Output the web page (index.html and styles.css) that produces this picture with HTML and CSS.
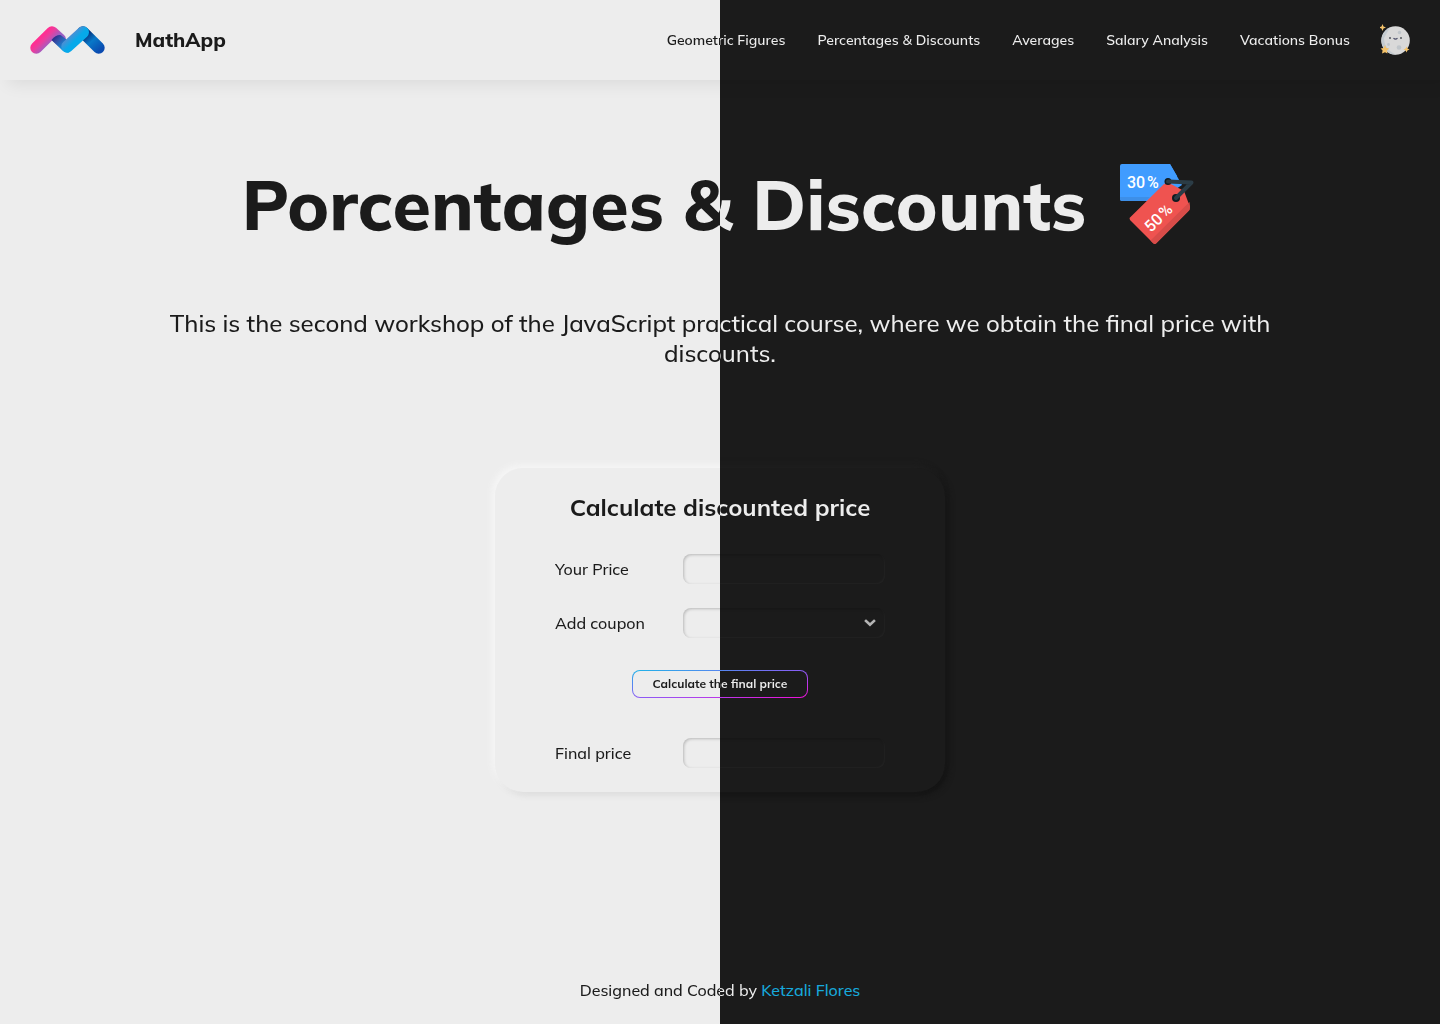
FILE: index.html
```html
<!DOCTYPE html>
<html lang="en">
<head>
<meta charset="utf-8">
<meta name="viewport" content="width=device-width, initial-scale=1">
<title>MathApp</title>
<link rel="stylesheet" href="styles.css">
</head>
<body>
<header class="header">
  <a class="brand" href="#">
    <svg class="brand-logo" viewBox="0 0 75 28" aria-hidden="true">
      <defs>
        <linearGradient id="pink" x1="11" y1="11" x2="19" y2="19" gradientUnits="userSpaceOnUse"><stop offset="0" stop-color="#ff2f92"/><stop offset=".4" stop-color="#e83f9f"/><stop offset="1" stop-color="#9b5fc4"/></linearGradient>
        <linearGradient id="indigo" x1="24" y1="11" x2="36" y2="23" gradientUnits="userSpaceOnUse"><stop offset="0" stop-color="#2b2a86"/><stop offset=".3" stop-color="#3350a8"/><stop offset="1" stop-color="#06a5ea"/></linearGradient>
        <linearGradient id="sky" x1="25" y1="25" x2="32" y2="32" gradientUnits="userSpaceOnUse"><stop offset="0" stop-color="#4b8fd4"/><stop offset=".7" stop-color="#06a9ea"/></linearGradient>
        <linearGradient id="navy" x1="57" y1="8" x2="71" y2="24" gradientUnits="userSpaceOnUse"><stop offset="0" stop-color="#06357f"/><stop offset=".4" stop-color="#0878c8"/><stop offset="1" stop-color="#0a4bb0"/></linearGradient>
      </defs>
      <g fill="none" stroke-width="12" stroke-linecap="round" stroke-linejoin="round">
        <path d="M53 6.300L68.700 21.700" stroke="url(#navy)"/>
        <path d="M6.300 21.700L22 6.300L30 13.500" stroke="url(#pink)"/>
      </g>
      <path d="M21.500 14Q26 8.500 31 9.200L42 18L39 26.500Q35.500 27.300 33 25Z" fill="url(#indigo)"/>
      <path d="M37.300 20.500L53 6.300" fill="none" stroke="url(#sky)" stroke-width="12" stroke-linecap="round"/>
    </svg>
    <span class="brand-name split-text">MathApp</span>
  </a>
  <nav class="nav">
    <a class="split-text" href="#">Geometric Figures</a>
    <a class="split-text" href="#">Percentages &amp; Discounts</a>
    <a class="split-text" href="#">Averages</a>
    <a class="split-text" href="#">Salary Analysis</a>
    <a class="split-text" href="#">Vacations Bonus</a>
  </nav>
  <button class="theme" type="button" aria-label="Change theme">
    <svg viewBox="0 0 30 32" aria-hidden="true">
      <circle cx="15.500" cy="16.500" r="14.300" fill="#d9d9d9"/>
      <path d="M10 3.400A14.300 14.300 0 0 0 17 30.700A17 17 0 0 1 4 14Z" fill="#c4cbd0"/>
      <g fill="#bfc5ca"><circle cx="19.500" cy="8.500" r="1.700"/><circle cx="8.500" cy="20.500" r="1.400"/><circle cx="19" cy="23.500" r="2.300"/></g>
      <g fill="#55575c"><circle cx="10" cy="14" r="1"/><circle cx="21" cy="14" r="1"/></g>
      <path d="M13.500 14.200q2 2 4 0" fill="none" stroke="#4d4f69" stroke-width="1.200"/>
      <g fill="#f5c36a"><path d="M2.500 0l1 2.500 2.500 1-2.500 1-1 2.500-1-2.500-2.500-1 2.500-1z"/><path d="M5 21l1.200 3 3 .4-2.200 2.200.4 3L5 28.200l-3 1.400.6-3L.6 24.400l3.200-.4z"/><path d="M26.500 22.500l.9 2.100 2.100.9-2.100.9-.9 2.100-.9-2.100-2.100-.9 2.100-.9z"/></g>
    </svg>
  </button>
</header>

<main class="main">
  <div class="title-row">
    <h1 class="title split-text">Porcentages &amp; Discounts</h1>
    <svg class="tags" viewBox="0 0 74 80" aria-hidden="true">
      <path d="M2 0H50L57 12V37H2Q0 37 0 35V2Q0 0 2 0Z" fill="#409cff"/>
      <path d="M0 33H30L26 37H2Q0 37 0 35Z" fill="#3d8fe8"/>
      <path d="M50 0L62 21L50 29Z" fill="#409cff"/>
      <path d="M10 56L9.500 54L44 20Q46 18.500 49 19L64 27L70 43Q70 46 68 47.500L36 79.500Q34.500 80.500 33 79Z" fill="#ef5350"/>
      <path d="M70 43Q70 46 68 47.500L36 79.500Q34.500 80.500 33 79L30.500 76.500L69.500 38Z" fill="#d84c49"/>
      <circle cx="48" cy="17.500" r="3.500" fill="#111b20"/><circle cx="56" cy="34" r="4" fill="#111b20"/>
      <path d="M48 17.500L71.500 18.500L56 34" fill="none" stroke="#2b3c46" stroke-width="4" stroke-linecap="round" stroke-linejoin="round"/>
      <text class="tag-text" x="7" y="24">30</text>
      <text class="tag-text" x="27" y="24">%</text>
      <g transform="translate(31 69) rotate(-45)"><text class="tag-text" x="0" y="0">50</text><text class="tag-text" x="20" y="0">%</text></g>
    </svg>
  </div>
  <p class="intro split-text">This is the second workshop of the JavaScript practical course, where we obtain the final price with discounts.</p>

  <form class="card">
    <h2 class="card-title split-text">Calculate discounted price</h2>
    <div class="field">
      <label class="split-text" for="price">Your Price</label>
      <input class="control" id="price" type="text">
    </div>
    <div class="field">
      <label class="split-text" for="coupon">Add coupon</label>
      <div class="select-wrap">
        <select class="control" id="coupon"><option></option></select>
        <svg class="chevron" viewBox="0 0 12 8" aria-hidden="true"><path d="M2 2L6 5.800L10 2" fill="none" stroke="#b5b5b5" stroke-width="2.600" stroke-linecap="square"/></svg>
      </div>
    </div>
    <button class="submit" type="button"><span class="split-text">Calculate the final price</span></button>
    <div class="field">
      <label class="split-text" for="final">Final price</label>
      <input class="control" id="final" type="text" readonly>
    </div>
  </form>
</main>

<footer class="footer"><span class="split-text">Designed and Coded by</span> <a href="#">Ketzali Flores</a></footer>
</body>
</html>
```
FILE: styles.css
```css
:root {
  --light: #ededed;
  --dark: #1b1b1b;
  --split: linear-gradient(90deg, var(--light) 50%, var(--dark) 50%);
  --split-ink: linear-gradient(90deg, var(--dark) 50%, var(--light) 50%);
}
* { box-sizing: border-box; }
body {
  margin: 0;
  min-height: 100vh;
  display: flex;
  flex-direction: column;
  background: var(--split) fixed;
  font-family: Mulish, Muli, "Open Sans", sans-serif;
  font-size: 16px;
  font-weight: 500;
  line-height: 20px;
}
a { text-decoration: none; }

/* Ink that swaps with the background at the middle of the window */
.split-text {
  background: var(--split-ink) fixed;
  -webkit-background-clip: text;
  background-clip: text;
  color: transparent;
}

.header {
  height: 80px;
  padding: 0 30px;
  display: flex;
  align-items: center;
  background: var(--split) fixed;
  box-shadow: 8px 4px 16px rgba(0, 0, 0, .08);
}
.brand { display: flex; align-items: center; gap: 30px; }
.brand-logo { width: 75px; height: 28px; }
.brand-name { font-size: 20px; font-weight: 800; line-height: 28px; }
.nav { display: flex; gap: 32px; margin-left: auto; font-size: 14px; font-weight: 600; }
.theme {
  width: 30px;
  height: 32px;
  margin-left: 30px;
  padding: 0;
  border: 0;
  background: none;
  cursor: pointer;
}
.theme svg { display: block; }

.main {
  flex: 1;
  display: flex;
  flex-direction: column;
  align-items: center;
  padding: 84px 24px 40px;
}
.title-row { display: flex; align-items: center; gap: 34px; padding-right: 4px; }
.title { margin: -8px 0; font-size: 70px; font-weight: 800; line-height: 96px; }
.tags { width: 74px; height: 80px; overflow: visible; }
.tag-text { fill: #fff; font: 500 16px Roboto, sans-serif; }
.intro {
  max-width: 1152px;
  margin: 64px 0 100px;
  text-align: center;
  font-size: 24px;
  line-height: 30px;
}

.card {
  position: relative;
  width: 100%;
  max-width: 450px;
  padding: 24px 60px;
  display: flex;
  flex-direction: column;
}
.card::before,
.card::after {
  content: "";
  position: absolute;
  inset: 0;
  border-radius: 28px;
  pointer-events: none;
}
.card::before {
  box-shadow: -3px -3px 6px #f6f6f6, 3px 3px 6px #d9d9d9;
  clip-path: inset(-20px 50% -20px -20px);
}
.card::after {
  box-shadow: -3px -3px 6px #1f1f1f, 3px 3px 6px #141414;
  clip-path: inset(-20px -20px -20px 50%);
}
.card-title {
  margin: 0 -20px 32px;
  text-align: center;
  font-size: 24px;
  font-weight: 700;
  line-height: 30px;
}
.field {
  display: grid;
  grid-template-columns: 1fr 202px;
  align-items: center;
  margin-bottom: 24px;
}
.field:last-child { margin-bottom: 0; }
.control {
  display: block;
  width: 100%;
  height: 30px;
  padding: 0 10px;
  appearance: none;
  border: 0;
  border-radius: 8px;
  background: none;
  color: var(--light);
  font: inherit;
  box-shadow: inset 1px 1px 3px rgba(0, 0, 0, .22), inset -1px -1px 2px rgba(255, 255, 255, .04);
}
.select-wrap { position: relative; }
.chevron { position: absolute; right: 9px; top: 11px; width: 12px; height: 8px; pointer-events: none; }
.submit {
  align-self: center;
  height: 28px;
  margin: 8px 0 40px;
  padding: 0 20px;
  border: 1px solid transparent;
  border-radius: 8px;
  background:
    var(--split) fixed padding-box,
    linear-gradient(to bottom right, #1cb5e8, #8a5cf6 50%, #f00fd8) border-box;
  font: 700 12px/16px Mulish, Muli, "Open Sans", sans-serif;
  cursor: pointer;
}

.footer { padding: 0 24px 24px; text-align: center; }
.footer a { color: #17a9dc; }
```
